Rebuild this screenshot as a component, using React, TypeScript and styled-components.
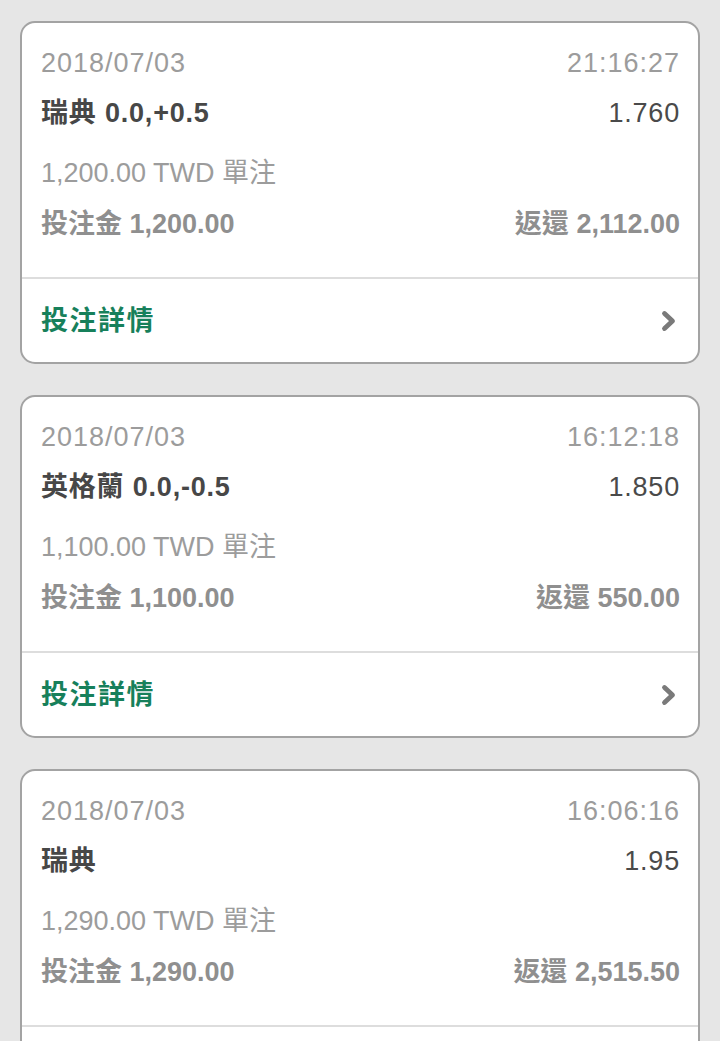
import React from "react";
import styled, { createGlobalStyle } from "styled-components";

const Global = createGlobalStyle`
  html, body {
    margin: 0;
    padding: 0;
    background: #e6e6e6;
  }
  body {
    font-family: "Liberation Sans", "Noto Sans CJK TC", sans-serif;
    -webkit-font-smoothing: antialiased;
  }
`;

const Page = styled.div`
  display: flex;
  flex-direction: column;
  gap: 31px;
  padding: 21px 20px 40px;
  background: #e6e6e6;
  min-height: 1041px;
  box-sizing: border-box;
`;

const Card = styled.section`
  background: #ffffff;
  border: 2px solid #a3a3a3;
  border-radius: 15px;
  overflow: hidden;
`;

const Body = styled.div`
  display: flex;
  flex-direction: column;
  padding: 15px 18px 28px 19px;
`;

const Row = styled.div<{ $h: number; $mt?: number }>`
  display: flex;
  justify-content: space-between;
  align-items: center;
  height: ${(p) => p.$h}px;
  margin-top: ${(p) => p.$mt ?? 0}px;
  font-size: 27px;
  line-height: 32px;
  white-space: nowrap;
`;

const Muted = styled.span<{ $wide?: boolean }>`
  color: #9c9c9c;
  font-weight: 400;
  letter-spacing: ${(p) => (p.$wide ? "1px" : "0")};
`;

const Title = styled.span`
  color: #474747;
  font-weight: 700;
  letter-spacing: 0.8px;
`;

const Odds = styled.span`
  color: #4a4a4a;
  font-weight: 400;
  letter-spacing: 0.8px;
`;

const Stake = styled.span`
  color: #8f8f8f;
  font-weight: 700;
`;

const Label = styled.span`
  font-weight: 700;
`;

const Footer = styled.div`
  display: flex;
  justify-content: space-between;
  align-items: center;
  height: 82px;
  padding: 1px 20px 0 19px;
  border-top: 2px solid #dddddd;
`;

const DetailLink = styled.span`
  color: #17805b;
  font-size: 27px;
  line-height: 32px;
  font-weight: 700;
  letter-spacing: 1.5px;
`;

const Chevron = () => (
  <svg width="18" height="24" viewBox="0 0 18 24" aria-hidden="true">
    <path
      d="M4.5 4.5 L12.5 12 L4.5 19.5"
      fill="none"
      stroke="#7a7a7a"
      strokeWidth="4.8"
      strokeLinecap="round"
      strokeLinejoin="round"
    />
  </svg>
);

type Bet = {
  date: string;
  time: string;
  title: string;
  odds: string;
  amount: string;
  stake: string;
  ret: string;
};

const bets: Bet[] = [
  {
    date: "2018/07/03",
    time: "21:16:27",
    title: "瑞典 0.0,+0.5",
    odds: "1.760",
    amount: "1,200.00",
    stake: "1,200.00",
    ret: "2,112.00",
  },
  {
    date: "2018/07/03",
    time: "16:12:18",
    title: "英格蘭 0.0,-0.5",
    odds: "1.850",
    amount: "1,100.00",
    stake: "1,100.00",
    ret: "550.00",
  },
  {
    date: "2018/07/03",
    time: "16:06:16",
    title: "瑞典",
    odds: "1.95",
    amount: "1,290.00",
    stake: "1,290.00",
    ret: "2,515.50",
  },
];

const BetCard = ({ bet }: { bet: Bet }) => (
  <Card>
    <Body>
      <Row $h={50}>
        <Muted $wide>{bet.date}</Muted>
        <Muted $wide>{bet.time}</Muted>
      </Row>
      <Row $h={49}>
        <Title>{bet.title}</Title>
        <Odds>{bet.odds}</Odds>
      </Row>
      <Row $h={51} $mt={10}>
        <Muted>{bet.amount} TWD 單注</Muted>
      </Row>
      <Row $h={51}>
        <Stake>
          <Label>投注金</Label> {bet.stake}
        </Stake>
        <Stake>
          <Label>返還</Label> {bet.ret}
        </Stake>
      </Row>
    </Body>
    <Footer>
      <DetailLink>投注詳情</DetailLink>
      <Chevron />
    </Footer>
  </Card>
);

export default function App() {
  return (
    <>
      <Global />
      <Page>
        {bets.map((b, i) => (
          <BetCard key={i} bet={b} />
        ))}
      </Page>
    </>
  );
}
